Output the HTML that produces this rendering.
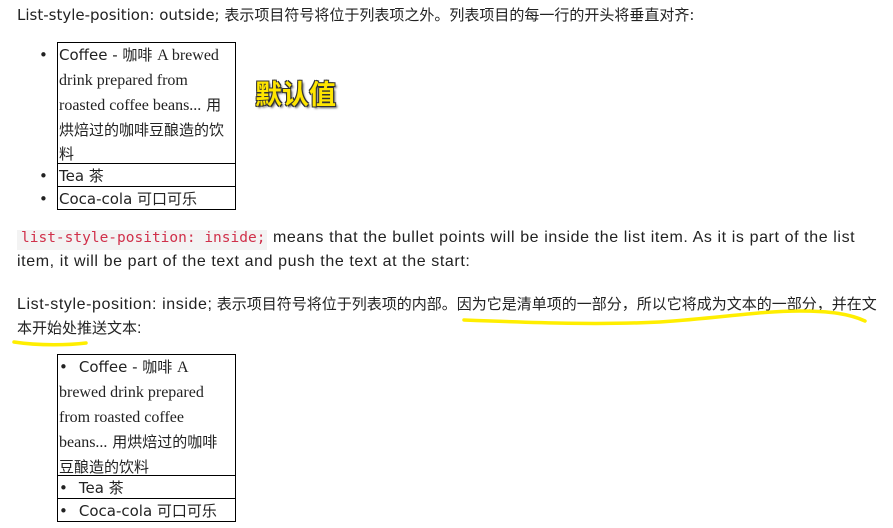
<!DOCTYPE html>
<html><head><meta charset="utf-8"><style>
body{margin:0;width:893px;height:528px;background:#fff;position:relative;overflow:hidden;color:#222;font-family:"DejaVu Sans","Noto Sans CJK SC",sans-serif;}
.a{position:absolute;white-space:nowrap;}
.t{font-size:15px;}
.box{position:absolute;left:57px;width:177px;border:1px solid #000;}
.it{border-bottom:1px solid #000;font-size:15px;line-height:24px;padding-left:1px;position:relative;white-space:nowrap;}
.it:last-child{border-bottom:none;}
.serif{font-family:"Liberation Serif","Noto Sans CJK SC",serif;font-size:16px;}
.bul{position:absolute;left:-19px;top:0;}
.p{font-family:"Liberation Sans","Noto Sans CJK SC",sans-serif;font-size:15px;color:#222;}
.p .l{font-size:16px;letter-spacing:0.6px;}
</style></head><body>
<div class="a t" style="left:17px;top:4px;">List-style-position: outside; 表示项目符号将位于列表项之外。列表项目的每一行的开头将垂直对齐:</div>
<div class="box" style="top:42px;">
 <div class="it" style="height:120px;"><span class="bul">•</span>Coffee - 咖啡 <span class="serif">A brewed<br>drink prepared from<br>roasted coffee beans...</span> 用<br>烘焙过的咖啡豆酿造的饮<br>料</div>
 <div class="it" style="height:22px;"><span class="bul">•</span>Tea 茶</div>
 <div class="it" style="height:22px;"><span class="bul">•</span>Coca-cola 可口可乐</div>
</div>
<div class="a" style="left:255px;top:76px;font-size:27px;font-weight:bold;color:#ffe600;font-family:'Noto Sans CJK SC',sans-serif;line-height:34px;text-shadow:1px 1px 0 #333,-1px -1px 0 #333,1px -1px 0 #333,-1px 1px 0 #333,2px 2px 2px #555;">默认值</div>
<div class="a" style="left:17px;top:230px;width:250px;height:20px;background:#f3f3f3;"></div>
<div class="a" style="left:21px;top:230px;font-family:'DejaVu Sans Mono','Liberation Mono',monospace;font-size:14.5px;color:#d0304a;">list-style-position: inside;</div>
<div class="a p" style="left:273px;top:229px;"><span class="l">means that the bullet points will be inside the list item. As it is part of the list</span></div>
<div class="a p" style="left:17px;top:253px;"><span class="l">item, it will be part of the text and push the text at the start:</span></div>
<div class="a p" style="left:17px;top:293px;"><span class="l">List-style-position: inside;</span> 表示项目符号将位于列表项的内部。因为它是清单项的一部分，所以它将成为文本的一部分，并在文</div>
<div class="a p" style="left:17px;top:317px;">本开始处推送文本<span class="l">:</span></div>
<svg class="a" style="left:0;top:0" width="893" height="528"><path d="M464 320 C540 323 600 325 660 322 C720 318 760 311 800 311 C830 311 850 314 865 321" stroke="#ffee00" stroke-width="3.5" fill="none" stroke-linecap="round"/><path d="M14 342 C40 346 70 345 86 343" stroke="#ffee00" stroke-width="3.5" fill="none" stroke-linecap="round"/></svg>
<div class="box" style="top:354px;">
 <div class="it" style="height:120px;"><span>•</span><span style="padding-left:11px;">Coffee - 咖啡 </span><span class="serif">A<br>brewed drink prepared<br>from roasted coffee<br>beans...</span> 用烘焙过的咖啡<br>豆酿造的饮料</div>
 <div class="it" style="height:22px;">•<span style="padding-left:11px;">Tea 茶</span></div>
 <div class="it" style="height:22px;">•<span style="padding-left:11px;">Coca-cola 可口可乐</span></div>
</div>
</body></html>
